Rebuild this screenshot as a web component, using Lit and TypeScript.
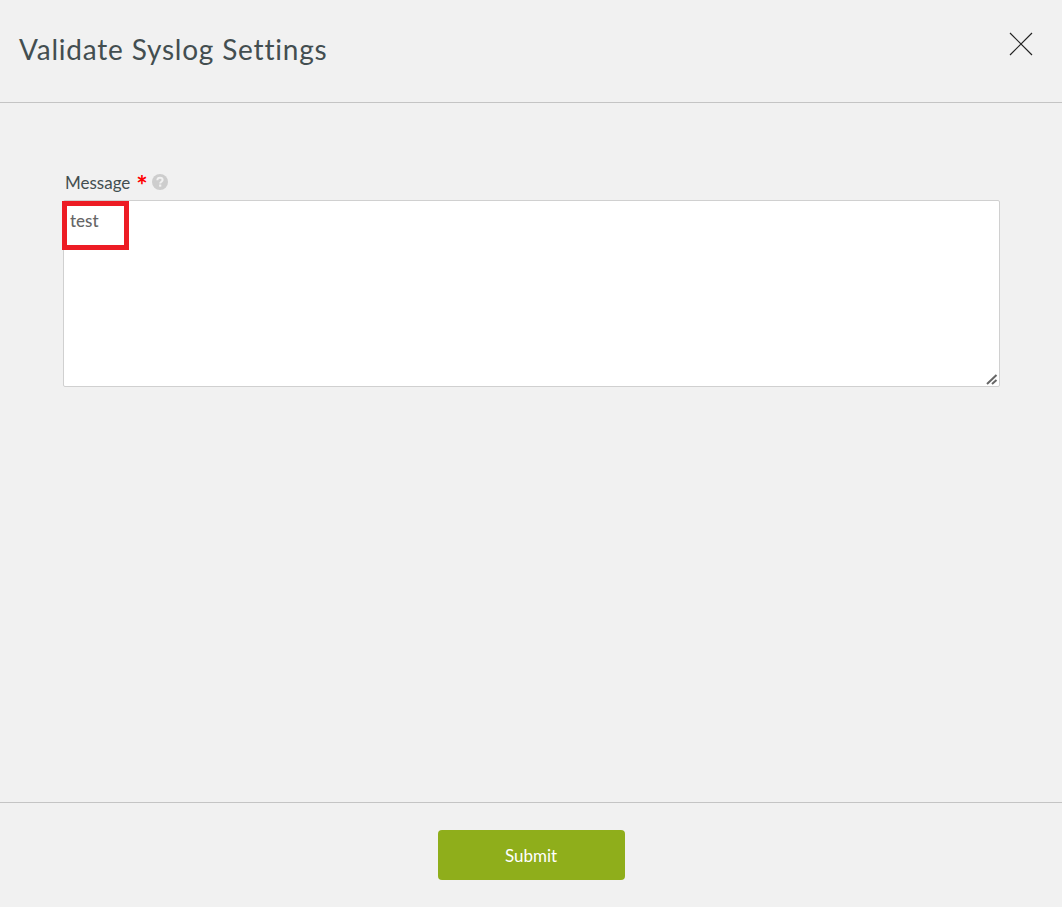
import { LitElement, css, html } from 'lit';
import { customElement } from 'lit/decorators.js';

@customElement('app-root')
export class AppRoot extends LitElement {
  static styles = css`
    :host {
      display: flex;
      flex-direction: column;
      height: 907px;
      background: #f1f1f1;
      font-family: Lato, 'Open Sans', sans-serif;
      color: #434e50;
      overflow: hidden;
    }
    .header {
      height: 102px;
      flex: none;
      display: flex;
      justify-content: space-between;
      border-bottom: 1px solid #c4c4c4;
    }
    h1 {
      margin: 30px 0 0 19px;
      font-size: 28px;
      line-height: 38px;
      font-weight: 400;
      letter-spacing: 0.8px;
    }
    .close {
      width: 24px;
      height: 24px;
      margin: 32px 29px 0 0;
      padding: 0;
      border: 0;
      background: none;
    }
    .close svg {
      display: block;
    }
    .body {
      flex: 1;
      padding: 67px 63px 0;
    }
    .label-row {
      display: flex;
      align-items: center;
      height: 24px;
      margin-bottom: 6px;
      padding-left: 2px;
      font-size: 17px;
    }
    .required {
      color: #f00;
      font-size: 27px;
      font-weight: 700;
      line-height: 22px;
      margin: 5px 0 0 6px;
    }
    .help {
      margin-left: 4px;
      display: block;
    }
    .field {
      position: relative;
    }
    textarea {
      display: block;
      box-sizing: border-box;
      width: 937px;
      height: 187px;
      margin: 0;
      padding: 10px 6px 8px;
      background: #fff;
      border: 1px solid #d0d0d0;
      border-radius: 2px;
      outline: none;
      resize: none;
      font: 500 17px/20px Lato, 'Open Sans', sans-serif;
      color: #666;
    }
    .highlight {
      position: absolute;
      left: -1px;
      top: 1px;
      width: 67px;
      height: 49px;
      box-sizing: border-box;
      border: 5px solid #ed1c24;
      pointer-events: none;
    }
    .grip {
      position: absolute;
      right: 1px;
      bottom: 2px;
      display: block;
      pointer-events: none;
    }
    .footer {
      height: 105px;
      flex: none;
      display: flex;
      justify-content: center;
      padding-top: 27px;
      box-sizing: border-box;
      border-top: 1px solid #c4c4c4;
    }
    .submit {
      width: 187px;
      height: 50px;
      border: 0;
      border-radius: 4px;
      background: #8fae1b;
      color: #fff;
      font: 400 17px Lato, 'Open Sans', sans-serif;
    }
  `;

  render() {
    return html`
      <div class="header">
        <h1>Validate Syslog Settings</h1>
        <button class="close" aria-label="Close">
          <svg width="24" height="24" viewBox="0 0 24 24">
            <path d="M1 1 L23 23 M23 1 L1 23" stroke="#222" stroke-width="1.2" fill="none" />
          </svg>
        </button>
      </div>
      <div class="body">
        <div class="label-row">
          <span>Message</span>
          <span class="required">*</span>
          <svg class="help" width="16" height="16" viewBox="0 0 16 16">
            <circle cx="8" cy="8" r="8" fill="#cdcdcd" />
            <path d="M5.3 6.2 C5.4 4.6 6.6 3.8 8 3.8 C9.5 3.8 10.6 4.7 10.6 6 C10.6 7.7 8.2 7.8 8.2 9.6" stroke="#f1f1f1" stroke-width="2" fill="none" />
            <rect x="7.1" y="10.5" width="2.2" height="2.2" fill="#f1f1f1" />
          </svg>
        </div>
        <div class="field">
          <textarea .value=${'test'}></textarea>
          <svg class="grip" width="12" height="11" viewBox="0 0 12 11">
            <path d="M1 10 L10.5 1 M6 10 L10.5 6" stroke="#666" stroke-width="2" fill="none" />
          </svg>
          <div class="highlight"></div>
        </div>
      </div>
      <div class="footer">
        <button class="submit">Submit</button>
      </div>
    `;
  }
}
